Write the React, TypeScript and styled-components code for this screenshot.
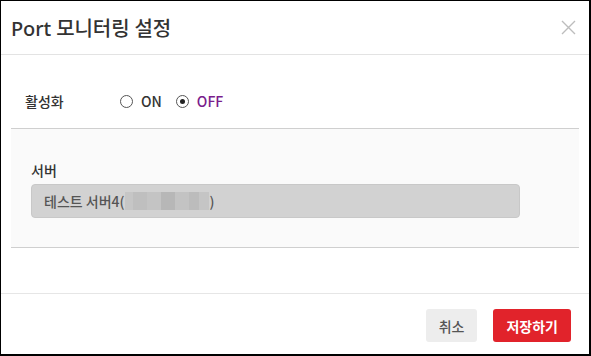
import React from "react";
import styled, { createGlobalStyle } from "styled-components";

const Global = createGlobalStyle`
  html, body { margin: 0; padding: 0; background: #fff; }
  body { font-family: "Noto Sans CJK KR", "Noto Sans", sans-serif; }
  * { box-sizing: border-box; }
`;

const Dialog = styled.div`
  width: 591px;
  height: 356px;
  border: 1px solid #000;
  border-right-width: 2px;
  border-bottom-width: 2px;
  background: #fff;
  display: flex;
  flex-direction: column;
  overflow: hidden;
`;

const Header = styled.div`
  height: 54px;
  flex: none;
  display: flex;
  align-items: center;
  justify-content: space-between;
  padding: 0 13px 0 10px;
  border-bottom: 1px solid #e3e3e3;
`;

const Title = styled.h1`
  margin: 0;
  font-family: "Noto Sans", "Noto Sans CJK KR", sans-serif;
  font-size: 20px;
  font-weight: 500;
  color: #333;
  letter-spacing: -0.1px;
  line-height: 1;
  padding-top: 2px;
`;

const CloseButton = styled.button`
  border: 0;
  background: none;
  padding: 0;
  width: 16px;
  height: 16px;
  display: flex;
  align-items: center;
  justify-content: center;
  cursor: pointer;
`;

const Body = styled.div`
  flex: 1;
  padding: 0 10px;
  display: flex;
  flex-direction: column;
`;

const ToggleRow = styled.div`
  display: flex;
  align-items: center;
  padding: 36px 14px 17px;
  border-bottom: 1px solid #cfcfcf;
  height: 74px;
`;

const Label = styled.span`
  font-family: "Noto Sans CJK KR", sans-serif;
  font-size: 14px;
  font-weight: 500;
  color: #333;
  line-height: 20px;
`;

const RowLabel = styled(Label)`
  width: 95px;
`;

const RadioGroup = styled.div`
  display: flex;
  align-items: center;
  gap: 14px;
`;

const RadioOption = styled.label`
  display: flex;
  align-items: center;
  gap: 8px;
  cursor: pointer;
`;

const RadioCircle = styled.span<{ $checked: boolean }>`
  width: 13px;
  height: 13px;
  border-radius: 50%;
  border: 1px solid #555;
  background: #fff;
  display: flex;
  align-items: center;
  justify-content: center;
  &::after {
    content: "";
    width: 5px;
    height: 5px;
    border-radius: 50%;
    background: #222;
    display: ${(p) => (p.$checked ? "block" : "none")};
  }
`;

const RadioText = styled.span<{ $active: boolean }>`
  font-family: "Noto Sans CJK KR", sans-serif;
  font-size: 14px;
  font-weight: 500;
  line-height: 20px;
  color: ${(p) => (p.$active ? "#7a1d8c" : "#333")};
`;

const Panel = styled.div`
  background: #fafafa;
  border-bottom: 1px solid #cfcfcf;
  padding: 31px 20px 29px;
  display: flex;
  flex-direction: column;
  gap: 4px;
`;

const Field = styled.div`
  width: 489px;
  height: 34px;
  background: #d2d2d2;
  border: 1px solid #c8c8c8;
  border-radius: 4px;
  display: flex;
  align-items: center;
  padding: 0 12px;
  font-family: "Noto Sans CJK KR", sans-serif;
  font-size: 14px;
  font-weight: 500;
  color: #555;
`;

const Mosaic = styled.span`
  display: inline-flex;
  height: 18px;
  margin: 0 1px 0 0;
`;

const MosaicCell = styled.span<{ $w: number; $c: string }>`
  display: block;
  width: ${(p) => p.$w}px;
  height: 100%;
  background: ${(p) => p.$c};
`;

const Footer = styled.div`
  flex: none;
  height: 61px;
  border-top: 1px solid #e6e6e6;
  display: flex;
  justify-content: flex-end;
  align-items: flex-start;
  gap: 16px;
  padding: 15px 18px 0 0;
`;

const Button = styled.button<{ $primary?: boolean }>`
  height: 33px;
  border: 0;
  border-radius: 3px;
  padding: 0 13px;
  font-family: "Noto Sans CJK KR", sans-serif;
  font-size: 14px;
  font-weight: ${(p) => (p.$primary ? 700 : 500)};
  cursor: pointer;
  background: ${(p) => (p.$primary ? "#e1232b" : "#ededed")};
  color: ${(p) => (p.$primary ? "#fff" : "#555")};
`;

const mosaic: [number, string][] = [
  [8, "#c6c6c6"],
  [14, "#bfbfbf"],
  [14, "#c4c4c4"],
  [14, "#b7b7b7"],
  [14, "#c3c3c3"],
  [10, "#bcbcbc"],
  [10, "#c5c5c5"],
];

export default function App() {
  return (
    <>
      <Global />
      <Dialog>
        <Header>
          <Title>Port 모니터링 설정</Title>
          <CloseButton aria-label="닫기">
            <svg width="15" height="15" viewBox="0 0 15 15">
              <path d="M1 1 L14 14 M14 1 L1 14" stroke="#bdbdbd" strokeWidth="1.4" fill="none" />
            </svg>
          </CloseButton>
        </Header>
        <Body>
          <ToggleRow>
            <RowLabel>활성화</RowLabel>
            <RadioGroup>
              <RadioOption>
                <RadioCircle $checked={false} />
                <RadioText $active={false}>ON</RadioText>
              </RadioOption>
              <RadioOption>
                <RadioCircle $checked={true} />
                <RadioText $active={true}>OFF</RadioText>
              </RadioOption>
            </RadioGroup>
          </ToggleRow>
          <Panel>
            <Label>서버</Label>
            <Field>
              테스트 서버4(
              <Mosaic>
                {mosaic.map(([w, c], i) => (
                  <MosaicCell key={i} $w={w} $c={c} />
                ))}
              </Mosaic>
              )
            </Field>
          </Panel>
        </Body>
        <Footer>
          <Button>취소</Button>
          <Button $primary>저장하기</Button>
        </Footer>
      </Dialog>
    </>
  );
}
